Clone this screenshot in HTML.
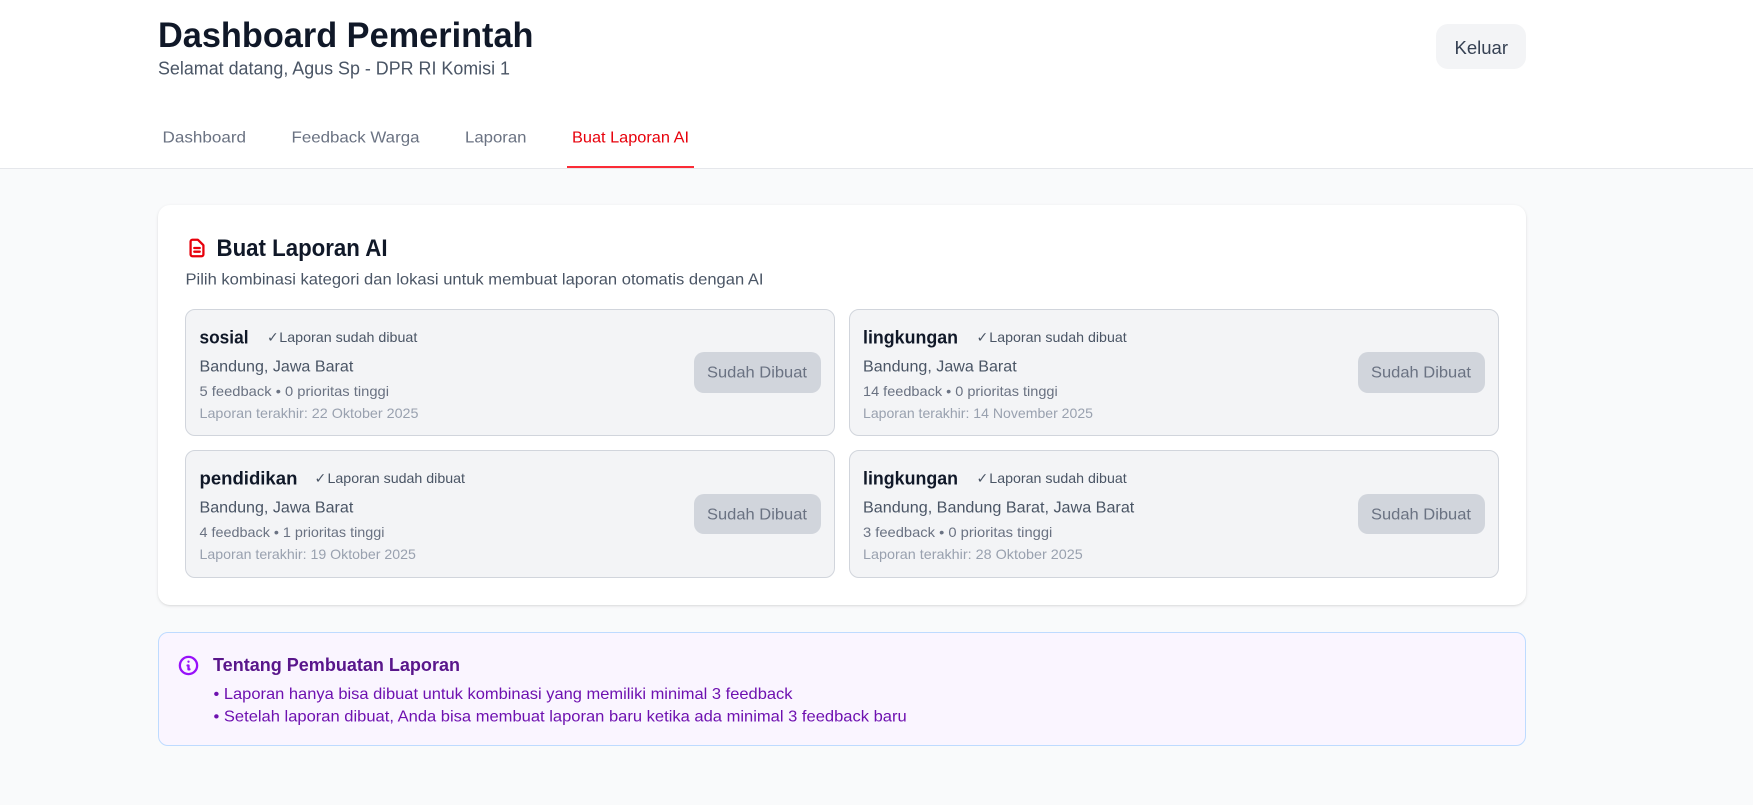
<!DOCTYPE html>
<html lang="id"><head><meta charset="utf-8"><title>Dashboard Pemerintah</title>
<style>
html,body{margin:0;padding:0;width:1753px;height:805px;overflow:hidden;background:#f9fafb}
div,svg{position:absolute;box-sizing:border-box}
.c{background:#f3f4f6;border:1px solid #d1d5dc;border-radius:10px}
.b{background:#d1d5dc;border-radius:10px}
svg text{font-family:"Liberation Sans",sans-serif}
.t{font-size:18px;font-weight:700;fill:#101828;stroke:none}
.k{font-size:14px;fill:#4a5565}
.ck{font-size:14px;fill:#4a5565;font-family:"DejaVu Sans",sans-serif}
.l{font-size:16px;fill:#4a5565}
.f{font-size:14px;fill:#6a7282}
.r{font-size:14px;fill:#99a1af}
.s{font-size:16px;fill:#6a7282}
.n{font-size:16px;fill:#6a7282}
.p{font-size:16px;fill:#6e11b0}
</style></head><body>
<div style="left:0;top:0;width:1753px;height:169px;background:#fff;border-bottom:1px solid #e5e7eb"></div>
<div style="left:567px;top:166px;width:127px;height:2px;background:#fb2c36"></div>
<div style="left:1436px;top:24px;width:90px;height:45px;background:#f3f4f6;border-radius:12px"></div>
<div style="left:158px;top:205px;width:1368px;height:400px;background:#fff;border-radius:12px;box-shadow:0 1px 3px rgba(0,0,0,.1),0 1px 2px -1px rgba(0,0,0,.1)"></div>
<div class="c" style="left:185px;top:309px;width:650px;height:127px"></div>
<div class="c" style="left:849px;top:309px;width:650px;height:127px"></div>
<div class="c" style="left:185px;top:450px;width:650px;height:128px"></div>
<div class="c" style="left:849px;top:450px;width:650px;height:128px"></div>
<div class="b" style="left:694px;top:352px;width:127px;height:41px"></div>
<div class="b" style="left:1357.5px;top:352px;width:127px;height:41px"></div>
<div class="b" style="left:694px;top:494px;width:127px;height:40px"></div>
<div class="b" style="left:1357.5px;top:494px;width:127px;height:40px"></div>
<div style="left:158px;top:632px;width:1368px;height:114px;background:#faf5ff;border:1px solid #bedbff;border-radius:10px"></div>

<svg style="left:185.5px;top:237px" width="22" height="22" viewBox="0 0 24 24" fill="none" stroke="#e7000b" stroke-width="2.5" stroke-linecap="round" stroke-linejoin="round"><path d="M9 12h6m-6 4h6m2 5H7a2 2 0 01-2-2V5a2 2 0 012-2h5.586a1 1 0 01.707.293l5.414 5.414a1 1 0 01.293.707V19a2 2 0 01-2 2z"/></svg>
<svg style="left:177px;top:653.5px" width="23" height="23" viewBox="0 0 24 24" fill="none" stroke="#9810fa" stroke-width="2.4" stroke-linecap="round" stroke-linejoin="round"><path d="M13 16h-1v-4h-1m1-4h.01M21 12a9 9 0 11-18 0 9 9 0 0118 0z"/></svg>

<svg style="left:0;top:0" width="1753" height="805" viewBox="0 0 1753 805">
<text x="158" y="47" font-size="35" font-weight="700" fill="#101828" textLength="375.5" lengthAdjust="spacingAndGlyphs">Dashboard Pemerintah</text>
<text x="158" y="74.5" font-size="18" fill="#4a5565" textLength="352" lengthAdjust="spacingAndGlyphs">Selamat datang, Agus Sp - DPR RI Komisi 1</text>
<text x="1454.5" y="54" font-size="18" fill="#364153" textLength="53.5" lengthAdjust="spacingAndGlyphs">Keluar</text>

<text class="n" x="162.5" y="142.5" textLength="83.5" lengthAdjust="spacingAndGlyphs">Dashboard</text>
<text class="n" x="291.5" y="142.5" textLength="128" lengthAdjust="spacingAndGlyphs">Feedback Warga</text>
<text class="n" x="465" y="142.5" textLength="61.5" lengthAdjust="spacingAndGlyphs">Laporan</text>
<text class="n" x="572" y="142.5" textLength="117" lengthAdjust="spacingAndGlyphs" style="fill:#e7000b">Buat Laporan AI</text>

<text x="216.5" y="256" font-size="24" font-weight="700" fill="#101828" textLength="171" lengthAdjust="spacingAndGlyphs">Buat Laporan AI</text>
<text x="185.5" y="284.5" font-size="16" fill="#4a5565" textLength="578" lengthAdjust="spacingAndGlyphs">Pilih kombinasi kategori dan lokasi untuk membuat laporan otomatis dengan AI</text>

<text class="t" x="199.5" y="343.5" textLength="49" lengthAdjust="spacingAndGlyphs">sosial</text>
<text class="ck" x="267" y="342">✓</text>
<text class="k" x="279.3" y="342" textLength="138" lengthAdjust="spacingAndGlyphs">Laporan sudah dibuat</text>
<text class="l" x="199.5" y="371.5" textLength="153.8" lengthAdjust="spacingAndGlyphs">Bandung, Jawa Barat</text>
<text class="f" x="199.5" y="396" textLength="189.5" lengthAdjust="spacingAndGlyphs">5 feedback • 0 prioritas tinggi</text>
<text class="r" x="199.5" y="417.8" textLength="219" lengthAdjust="spacingAndGlyphs">Laporan terakhir: 22 Oktober 2025</text>
<text class="s" x="707" y="377.5" textLength="100" lengthAdjust="spacingAndGlyphs">Sudah Dibuat</text>

<text class="t" x="863" y="343.5" textLength="95" lengthAdjust="spacingAndGlyphs">lingkungan</text>
<text class="ck" x="976.5" y="342">✓</text>
<text class="k" x="989.3" y="342" textLength="137.4" lengthAdjust="spacingAndGlyphs">Laporan sudah dibuat</text>
<text class="l" x="863" y="371.5" textLength="153.7" lengthAdjust="spacingAndGlyphs">Bandung, Jawa Barat</text>
<text class="f" x="863" y="396" textLength="194.7" lengthAdjust="spacingAndGlyphs">14 feedback • 0 prioritas tinggi</text>
<text class="r" x="863" y="417.8" textLength="230" lengthAdjust="spacingAndGlyphs">Laporan terakhir: 14 November 2025</text>
<text class="s" x="1371" y="377.5" textLength="100" lengthAdjust="spacingAndGlyphs">Sudah Dibuat</text>

<text class="t" x="199.5" y="484.5" textLength="97.9" lengthAdjust="spacingAndGlyphs">pendidikan</text>
<text class="ck" x="314.5" y="483">✓</text>
<text class="k" x="327.5" y="483" textLength="137.5" lengthAdjust="spacingAndGlyphs">Laporan sudah dibuat</text>
<text class="l" x="199.5" y="512.5" textLength="153.8" lengthAdjust="spacingAndGlyphs">Bandung, Jawa Barat</text>
<text class="f" x="199.5" y="537" textLength="185" lengthAdjust="spacingAndGlyphs">4 feedback • 1 prioritas tinggi</text>
<text class="r" x="199.5" y="558.8" textLength="216.4" lengthAdjust="spacingAndGlyphs">Laporan terakhir: 19 Oktober 2025</text>
<text class="s" x="707" y="519.5" textLength="100" lengthAdjust="spacingAndGlyphs">Sudah Dibuat</text>

<text class="t" x="863" y="484.5" textLength="95" lengthAdjust="spacingAndGlyphs">lingkungan</text>
<text class="ck" x="976.5" y="483">✓</text>
<text class="k" x="989.3" y="483" textLength="137.4" lengthAdjust="spacingAndGlyphs">Laporan sudah dibuat</text>
<text class="l" x="863" y="512.5" textLength="271.3" lengthAdjust="spacingAndGlyphs">Bandung, Bandung Barat, Jawa Barat</text>
<text class="f" x="863" y="537" textLength="189.3" lengthAdjust="spacingAndGlyphs">3 feedback • 0 prioritas tinggi</text>
<text class="r" x="863" y="558.8" textLength="219.7" lengthAdjust="spacingAndGlyphs">Laporan terakhir: 28 Oktober 2025</text>
<text class="s" x="1371" y="519.5" textLength="100" lengthAdjust="spacingAndGlyphs">Sudah Dibuat</text>

<text x="213" y="671.2" font-size="18" font-weight="700" fill="#59168b" textLength="247" lengthAdjust="spacingAndGlyphs">Tentang Pembuatan Laporan</text>
<text class="p" x="213.5" y="698.8" textLength="579" lengthAdjust="spacingAndGlyphs">• Laporan hanya bisa dibuat untuk kombinasi yang memiliki minimal 3 feedback</text>
<text class="p" x="213.5" y="721.5" textLength="693.2" lengthAdjust="spacingAndGlyphs">• Setelah laporan dibuat, Anda bisa membuat laporan baru ketika ada minimal 3 feedback baru</text>
</svg>
</body></html>
